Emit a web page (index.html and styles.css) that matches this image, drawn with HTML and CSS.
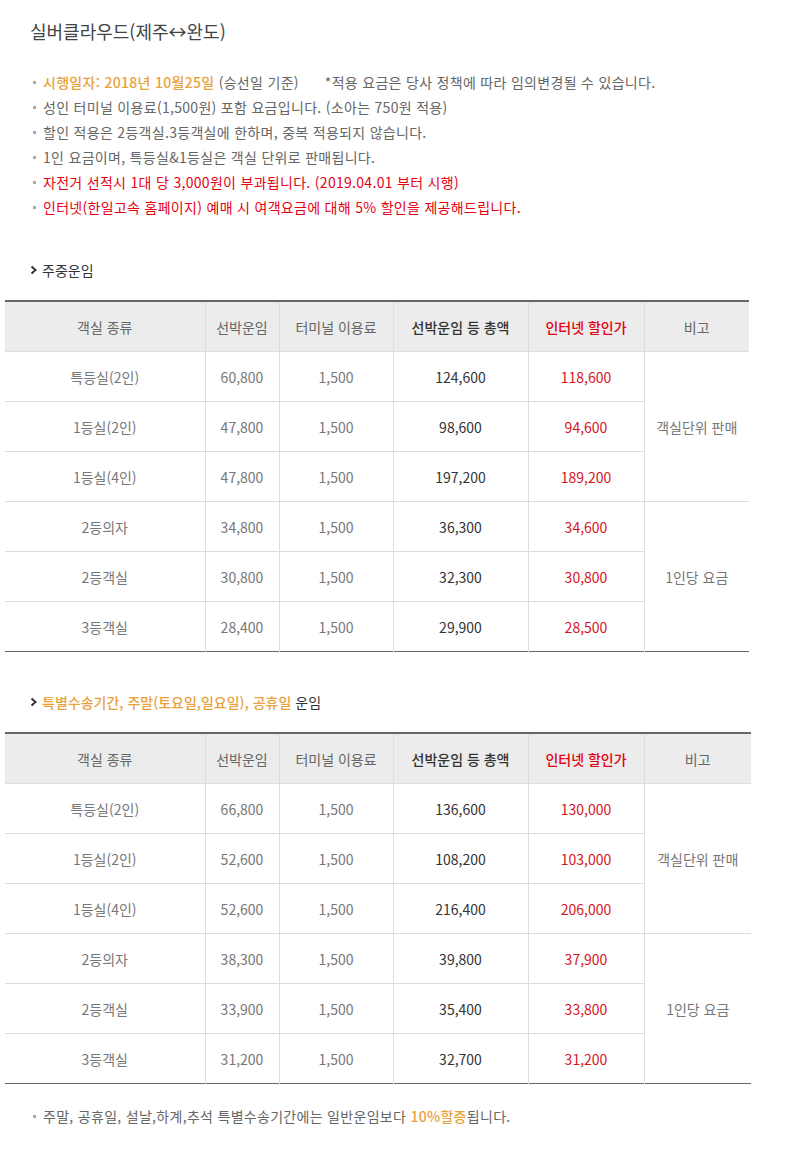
FILE: index.html
```html
<!DOCTYPE html>
<html lang="ko">
<head>
  <meta charset="UTF-8" />
  <meta name="viewport" content="width=device-width, initial-scale=1" />
  <title>실버클라우드 운임</title>
  <link rel="stylesheet" href="styles.css">
</head>
<body>

  <div class="page">
    <h1 class="title">실버클라우드(제주↔완도)</h1>

    <ul class="notes">
      <li><span class="orange">시행일자: 2018년 10월25일</span> (승선일 기준)<span class="notice">*적용 요금은 당사 정책에 따라 임의변경될 수 있습니다.</span></li>
      <li>성인 터미널 이용료(1,500원) 포함 요금입니다. (소아는 750원 적용)</li>
      <li>할인 적용은 2등객실.3등객실에 한하며, 중복 적용되지 않습니다.</li>
      <li>1인 요금이며, 특등실&amp;1등실은 객실 단위로 판매됩니다.</li>
      <li class="red">자전거 선적시 1대 당 3,000원이 부과됩니다. (2019.04.01 부터 시행)</li>
      <li class="red">인터넷(한일고속 홈페이지) 예매 시 여객요금에 대해 5% 할인을 제공해드립니다.</li>
    </ul>

    <h2 class="section-title">
      <svg class="chev" width="8" height="10" viewBox="0 0 8 10"><path d="M1.5 1.5 L5.5 5 L1.5 8.5" fill="none" stroke="#333" stroke-width="2"/></svg>
      주중운임
    </h2>

    <table class="fare">
      <colgroup>
        <col class="w-room"><col class="w-fare"><col class="w-term"><col class="w-total"><col class="w-net"><col class="w-memo">
      </colgroup>
      <thead>
        <tr>
          <th>객실 종류</th>
          <th>선박운임</th>
          <th>터미널 이용료</th>
          <th class="h-total">선박운임 등 총액</th>
          <th class="h-net">인터넷 할인가</th>
          <th>비고</th>
        </tr>
      </thead>
      <tbody>
        <tr><td>특등실(2인)</td><td>60,800</td><td>1,500</td><td class="total">124,600</td><td class="net">118,600</td><td class="memo" rowspan="3">객실단위 판매</td></tr>
        <tr><td>1등실(2인)</td><td>47,800</td><td>1,500</td><td class="total">98,600</td><td class="net">94,600</td></tr>
        <tr><td>1등실(4인)</td><td>47,800</td><td>1,500</td><td class="total">197,200</td><td class="net">189,200</td></tr>
        <tr><td>2등의자</td><td>34,800</td><td>1,500</td><td class="total">36,300</td><td class="net">34,600</td><td class="memo" rowspan="3">1인당 요금</td></tr>
        <tr><td>2등객실</td><td>30,800</td><td>1,500</td><td class="total">32,300</td><td class="net">30,800</td></tr>
        <tr><td>3등객실</td><td>28,400</td><td>1,500</td><td class="total">29,900</td><td class="net">28,500</td></tr>
      </tbody>
    </table>

    <h2 class="section-title">
      <svg class="chev" width="8" height="10" viewBox="0 0 8 10"><path d="M1.5 1.5 L5.5 5 L1.5 8.5" fill="none" stroke="#333" stroke-width="2"/></svg>
      <span class="orange">특별수송기간, 주말(토요일,일요일), 공휴일</span> 운임
    </h2>

    <table class="fare wide">
      <colgroup>
        <col class="w-room"><col class="w-fare"><col class="w-term"><col class="w-total"><col class="w-net"><col class="w-memo">
      </colgroup>
      <thead>
        <tr>
          <th>객실 종류</th>
          <th>선박운임</th>
          <th>터미널 이용료</th>
          <th class="h-total">선박운임 등 총액</th>
          <th class="h-net">인터넷 할인가</th>
          <th>비고</th>
        </tr>
      </thead>
      <tbody>
        <tr><td>특등실(2인)</td><td>66,800</td><td>1,500</td><td class="total">136,600</td><td class="net">130,000</td><td class="memo" rowspan="3">객실단위 판매</td></tr>
        <tr><td>1등실(2인)</td><td>52,600</td><td>1,500</td><td class="total">108,200</td><td class="net">103,000</td></tr>
        <tr><td>1등실(4인)</td><td>52,600</td><td>1,500</td><td class="total">216,400</td><td class="net">206,000</td></tr>
        <tr><td>2등의자</td><td>38,300</td><td>1,500</td><td class="total">39,800</td><td class="net">37,900</td><td class="memo" rowspan="3">1인당 요금</td></tr>
        <tr><td>2등객실</td><td>33,900</td><td>1,500</td><td class="total">35,400</td><td class="net">33,800</td></tr>
        <tr><td>3등객실</td><td>31,200</td><td>1,500</td><td class="total">32,700</td><td class="net">31,200</td></tr>
      </tbody>
    </table>

    <ul class="notes foot">
      <li>주말, 공휴일, 설날,하계,추석 특별수송기간에는 일반운임보다 <span class="orange">10%할증</span>됩니다.</li>
    </ul>
  </div>

</body>
</html>
```

FILE: styles.css
```css
body {
  margin: 0;
  background: #fff;
  color: #666;
  font-family: "Noto Sans CJK KR", "Noto Sans", sans-serif;
  font-size: 14px;
}
.page {
  padding: 18px 0 40px 5px;
}
.title {
  margin: 0 0 0 25px;
  font-size: 18px;
  line-height: 26px;
  font-weight: normal;
  color: #444;
}
.notes {
  list-style: none;
  margin: 26px 0 0 28px;
  padding: 0;
}
.notes li {
  position: relative;
  padding-left: 10px;
  line-height: 25px;
  letter-spacing: 0.3px;
}
.notes li::before {
  content: "";
  position: absolute;
  left: 0;
  top: 11px;
  width: 3px;
  height: 3px;
  background: #aaa;
}
.notice {
  margin-left: 26px;
}
.orange {
  color: #e9a23b;
  font-weight: 500;
}
.red {
  color: #e60012;
}
.section-title {
  display: flex;
  align-items: center;
  gap: 4px;
  margin: 40px 0 20px 25px;
  font-size: 14px;
  line-height: 20px;
  font-weight: normal;
  color: #333;
}
.chev {
  display: block;
}
.fare {
  width: 744px;
  table-layout: fixed;
  border-collapse: collapse;
  border-top: 2px solid #666;
  border-bottom: 1px solid #666;
  text-align: center;
}
.fare.wide {
  width: 746px;
}
.w-room { width: 200px; }
.w-fare { width: 74px; }
.w-term { width: 114px; }
.w-total { width: 135px; }
.w-net { width: 116px; }
.fare th,
.fare td {
  height: 49px;
  padding: 0;
  border-left: 1px solid #ddd;
  border-top: 1px solid #ddd;
  font-weight: normal;
}
.fare th:first-child,
.fare td:first-child {
  border-left: none;
}
.fare thead th {
  background: #ececec;
  color: #666;
  border-top: none;
}
.fare .h-total {
  color: #333;
  font-weight: 500;
}
.fare .h-net {
  color: #e60012;
  font-weight: 500;
}
.fare td {
  color: #777;
}
.fare td.total {
  color: #333;
}
.fare td.net {
  color: #d7141d;
}
.fare td.memo {
  color: #777;
}
.notes.foot {
  margin-top: 22px;
}
.notes.foot li {
  line-height: 20px;
}
.notes.foot li::before {
  top: 9px;
}
```
